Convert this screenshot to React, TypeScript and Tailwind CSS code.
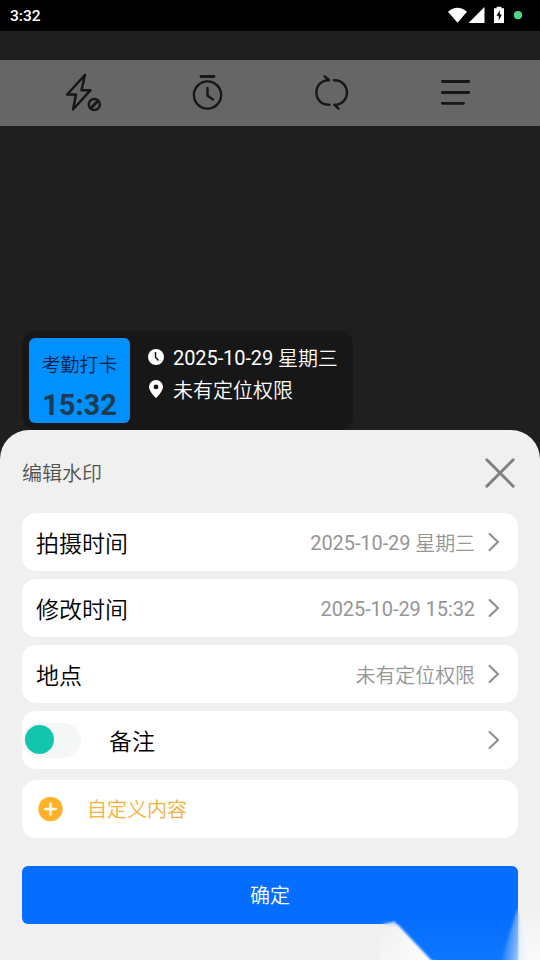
import React from "react";

const ink = "#171717";

function StatusBar() {
  return (
    <div className="flex h-[31px] items-center justify-between bg-black pl-[10px] pr-[16px]">
      <span className="pt-[2px] text-[15.5px] font-medium leading-none text-white">3:32</span>
      <div className="flex items-center">
        <svg width="76" height="20" viewBox="0 0 76 20" fill="white">
          <path d="M0 5Q9.5-2.8 19 5L9.5 16Z" transform="translate(0 .7)" />
          <path d="M20.5 17L36.5 1V17Z" />
          <path d="M46 2.3h2.6V.7h4.8v1.6H56v14.7H46Z" />
          <path d="M51.8 4.2l-3.3 5.6h2.2v4.6l3.1-6h-2Z" fill="black" />
          <circle cx="70" cy="9.2" r="4.1" fill="#4dd689" />
        </svg>
      </div>
    </div>
  );
}

function Toolbar() {
  return (
    <div className="flex h-[66px] items-center justify-between bg-[#666] pl-[62px] pr-[62px]">
      <svg width="44" height="44" viewBox="62 71 44 44" fill="none" stroke={ink} strokeWidth="2.5" strokeLinejoin="round" strokeLinecap="round">
        <path d="M85 74.8L67.2 94.5H76L73 109.5L90.3 90.3H81.5Z" />
        <circle cx="94.3" cy="104.6" r="5.5" />
        <path d="M91 108L97.6 101.2" strokeWidth="3" />
      </svg>
      <svg width="44" height="44" viewBox="186 71 44 44" fill="none" stroke={ink} strokeWidth="2.4" strokeLinecap="round" strokeLinejoin="round">
        <path d="M201 76.5H214" strokeWidth="2.8" />
        <circle cx="207.5" cy="95" r="13.6" />
        <path d="M207.5 88V95.7L213 99.5" />
      </svg>
      <svg width="44" height="44" viewBox="310 71 44 44" fill="none" stroke={ink} strokeWidth="2.4" strokeLinecap="round" strokeLinejoin="round">
        <path d="M329.5 104.7C321 105 316.4 98.8 316.4 92.5C316.4 85.5 321.5 80 329 80.2L324.7 76.3" />
        <path d="M334 80.2C342 80 347 86 347 92.5C347 99.5 341.5 104.9 334.3 104.7L338.5 108.7" />
      </svg>
      <svg width="44" height="44" viewBox="434 71 44 44" fill="none" stroke={ink} strokeWidth="2.8" strokeLinecap="round">
        <path d="M442.3 81.5H468.8M442.3 92.5H468.8M442.3 103.3H463.5" />
      </svg>
    </div>
  );
}

function Watermark() {
  return (
    <div className="ml-[22px] mt-[205px] flex h-[99px] w-[331px] shrink-0 rounded-[14px] bg-[#171717] px-[7px] pt-[7px]">
      <div className="flex h-[85px] w-[101px] flex-col items-center rounded-[6px] bg-[#0090ff]">
        <span className="mt-[14px] text-[19px] font-[350] leading-[28px] text-[#09233d]">考勤打卡</span>
        <span className="mt-[8px] text-[29px] font-bold leading-[34px] text-[#1d3c50]">15:32</span>
      </div>
      <div className="ml-[18px] flex flex-col pt-[3px] text-[20px] font-[350] text-white">
        <div className="flex h-[32px] items-center whitespace-nowrap">
          <svg className="mr-[9px]" width="16" height="18" viewBox="0 0 16 18">
            <circle cx="8" cy="9" r="8" fill="white" />
            <path d="M7.5 4V9.3L10.5 12.5" stroke="#171717" strokeWidth="1.5" fill="none" />
          </svg>
          <span className="pt-[3px] tracking-[-0.08px]">
            <span className="inline-block -translate-y-px font-normal">2025-10-29</span> 星期三
          </span>
        </div>
        <div className="flex h-[32px] items-center whitespace-nowrap">
          <svg className="mr-[9px]" width="16" height="18" viewBox="0 0 16 18">
            <path fillRule="evenodd" fill="white" d="M8 0A7 7 0 0 0 1 7C1 11.5 8 18 8 18S15 11.5 15 7A7 7 0 0 0 8 0ZM8 4.5A2.4 2.4 0 1 1 8 9.3A2.4 2.4 0 0 1 8 4.5Z" />
          </svg>
          <span className="pt-[4px]">未有定位权限</span>
        </div>
      </div>
    </div>
  );
}

function Chevron() {
  return (
    <svg width="14" height="22" viewBox="0 0 14 22" fill="none" stroke="#909090" strokeWidth="2.2" strokeLinecap="round" strokeLinejoin="round">
      <path d="M2.6 3L11 11L2.6 19" />
    </svg>
  );
}

function Row({ label, digits, value }: { label: string; digits?: string; value?: string }) {
  return (
    <div className="mb-2 flex h-[58px] items-center rounded-[14px] bg-white pl-[14px] pr-[17px]">
      <span className="pt-[7px] text-[23px] font-[350] text-black">{label}</span>
      <span className="ml-auto mr-[12px] whitespace-pre pt-[3px] text-[20px] font-[350] tracking-[-0.08px] text-[#959595]">
        {digits && <span className="inline-block -translate-y-px font-normal">{digits}</span>}
        {digits && value && " "}
        {value}
      </span>
      <Chevron />
    </div>
  );
}

/* Blue folded ribbon that overlaps the lower right corner of the sheet. */
function Ribbon() {
  return (
    <svg className="absolute bottom-0 right-0" width="160" height="60" viewBox="380 900 160 60">
      <defs>
        <linearGradient id="ribbon" gradientUnits="userSpaceOnUse" x1="0" y1="914" x2="0" y2="960">
          <stop offset="0" stopColor="#056dff" />
          <stop offset="1" stopColor="#0e77ff" />
        </linearGradient>
        <linearGradient id="glow" x1="0" y1="0" x2="1" y2="0.5">
          <stop offset="0" stopColor="white" stopOpacity="0" />
          <stop offset="1" stopColor="white" stopOpacity="0.8" />
        </linearGradient>
        <linearGradient id="glowRight" x1="0" y1="0" x2="0" y2="1">
          <stop offset="0" stopColor="white" stopOpacity="0" />
          <stop offset="1" stopColor="white" stopOpacity="0.75" />
        </linearGradient>
        <linearGradient id="shine" gradientUnits="userSpaceOnUse" x1="500" y1="957" x2="526" y2="960">
          <stop offset="0" stopColor="#d5e6ff" stopOpacity="0" />
          <stop offset="0.5" stopColor="#d5e6ff" stopOpacity="0.5" />
          <stop offset="1" stopColor="#f6f8fd" />
        </linearGradient>
        <filter id="soft" x="-20%" y="-20%" width="140%" height="140%">
          <feGaussianBlur stdDeviation="0.8" />
        </filter>
      </defs>
      <path d="M380 924H398L434 960H380Z" fill="url(#glow)" />
      <path d="M518 905H540V960H518Z" fill="url(#glowRight)" />
      <path d="M382 924L395 921.5L402 926L386 925.5Z" fill="#c9dffd" filter="url(#soft)" />
      <path d="M395 921.5L402 914H518V961H432Z" fill="url(#ribbon)" filter="url(#soft)" />
      <path d="M402 912H518V960H436L402 926Z" fill="url(#ribbon)" />
      <path d="M518 907L530 966H499Z" fill="url(#shine)" filter="url(#soft)" />
    </svg>
  );
}

function Sheet() {
  return (
    <div className="relative h-[530px] shrink-0 rounded-t-[29px] bg-[#f0f0f0] px-[22px] font-[350]">
      <div className="flex h-[83px] items-center justify-between pt-[3px]">
        <span className="pt-[2px] text-[20px] text-[#505050]">编辑水印</span>
        <svg className="mr-[2px]" width="32" height="32" viewBox="0 0 32 32" stroke="#808080" strokeWidth="3" strokeLinecap="round">
          <path d="M2.8 2.8L29.2 29.2M29.2 2.8L2.8 29.2" />
        </svg>
      </div>
      <Row label="拍摄时间" digits="2025-10-29" value="星期三" />
      <Row label="修改时间" digits="2025-10-29 15:32" />
      <Row label="地点" value="未有定位权限" />
      <div className="flex h-[58px] items-center overflow-hidden rounded-[14px] bg-white pr-[17px]">
        <div className="flex h-[35px] w-[59px] items-center rounded-full bg-[#f5f6f6] pb-[1px] pl-[3px]">
          <div className="h-[29px] w-[29px] rounded-full bg-[#13c5ad]" />
        </div>
        <span className="ml-[28px] mr-auto pt-[7px] text-[23px] text-black">备注</span>
        <Chevron />
      </div>
      <div className="mt-[11px] flex h-[58px] items-center rounded-[14px] bg-white pl-[16px]">
        <svg width="25" height="25" viewBox="0 0 25 25">
          <circle cx="12.5" cy="12" r="12.2" fill="#ffb229" />
          <path d="M12.5 6.8V17.2M7.3 12H17.7" stroke="white" strokeWidth="2.4" strokeLinecap="round" />
        </svg>
        <span className="ml-[24px] pt-[2px] text-[20px] text-[#f2b138]">自定义内容</span>
      </div>
      <button className="mt-[28px] flex h-[58px] w-full items-center justify-center rounded-[6px] bg-[#056dff] pt-[2px] text-[20px] text-white">
        确定
      </button>
      <Ribbon />
    </div>
  );
}

export default function App() {
  return (
    <div className="flex h-[960px] w-[540px] flex-col overflow-hidden bg-[#1f1f1f] font-[Roboto,'Noto_Sans_CJK_SC',sans-serif]">
      <StatusBar />
      <div className="h-[29px] shrink-0" />
      <Toolbar />
      <Watermark />
      <Sheet />
    </div>
  );
}
